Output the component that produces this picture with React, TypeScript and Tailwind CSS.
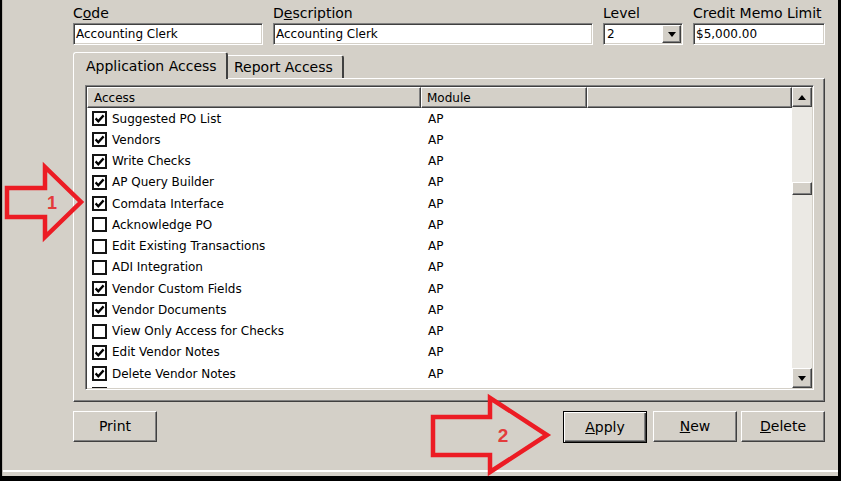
import React from "react";

type Row = [string, boolean];

const rows: Row[] = [
  ["Suggested PO List", true],
  ["Vendors", true],
  ["Write Checks", true],
  ["AP Query Builder", true],
  ["Comdata Interface", true],
  ["Acknowledge PO", false],
  ["Edit Existing Transactions", false],
  ["ADI Integration", false],
  ["Vendor Custom Fields", true],
  ["Vendor Documents", true],
  ["View Only Access for Checks", false],
  ["Edit Vendor Notes", true],
  ["Delete Vendor Notes", true],
];

// classic 3D edges
const sunken =
  "border border-t-[#808080] border-l-[#808080] border-r-white border-b-white shadow-[inset_1px_1px_0_#404040,inset_-1px_-1px_0_#d4d0c8]";
const raised =
  "border border-t-white border-l-white border-r-[#404040] border-b-[#404040] shadow-[inset_-1px_-1px_0_#808080] bg-[#d4d0c8]";

function Check({ on }: { on: boolean }) {
  return (
    <span className="w-[15px] h-[15px] border-2 border-[#141414] bg-white flex items-center justify-center shrink-0">
      {on && (
        <svg width="11" height="11" viewBox="0 0 11 11">
          <path d="M1.6 5.4 L4.3 8.2 L9.6 2.4" stroke="#000" strokeWidth="2.3" fill="none" />
        </svg>
      )}
    </span>
  );
}

function Field({ label, width, children }: { label: React.ReactNode; width: string; children: React.ReactNode }) {
  return (
    <div className={`flex flex-col ${width}`}>
      <div className="h-[17px] leading-[17px] text-[14px] whitespace-nowrap">{label}</div>
      <div className={`mt-[1px] h-[22px] bg-white ${sunken} p-[1px] flex items-center text-[12px]`}>{children}</div>
    </div>
  );
}

function Tri({ up }: { up?: boolean }) {
  return (
    <svg width="8" height="5" viewBox="0 0 8 5">
      <path d={up ? "M0 5 L8 5 L4 0 Z" : "M0 0 L8 0 L4 5 Z"} fill="#000" />
    </svg>
  );
}

function Btn({ children, def, w }: { children: React.ReactNode; def?: boolean; w: string }) {
  if (def) {
    return (
      <div className={`${w} h-[32px] border border-black bg-[#d4d0c8] shadow-[inset_1px_1px_0_#fff,inset_-1px_-1px_0_#404040,inset_-2px_-2px_0_#808080] flex items-center justify-center text-[14px]`}>
        {children}
      </div>
    );
  }
  return (
    <div className={`${w} h-[31px] ${raised} flex items-center justify-center text-[14px]`}>{children}</div>
  );
}

export default function App() {
  return (
    <div className="relative w-[841px] h-[481px] bg-black pl-[2px] pr-[3px] pb-[5px] font-['DejaVu_Sans',sans-serif] text-black overflow-hidden">
      <div className="h-full bg-[#d4d0c8] border-l border-l-[#b9b5ae] flex flex-col">
        <div className="flex-1 flex flex-col pl-[70px] pr-[13px] pt-[5px]">
          {/* top fields */}
          <div className="flex gap-[10px]">
            <Field label={<>C<span className="underline">o</span>de</>} width="w-[190px]">
              <span className="pl-[1px]">Accounting Clerk</span>
            </Field>
            <Field label={<>D<span className="underline">e</span>scription</>} width="w-[320px]">
              <span className="pl-[1px]">Accounting Clerk</span>
            </Field>
            <Field label="Level" width="w-[80px]">
              <span className="pl-[2px] flex-1">2</span>
              <span className={`w-[19px] h-[18px] ${raised} flex items-center justify-center`}>
                <Tri />
              </span>
            </Field>
            <Field label="Credit Memo Limit" width="w-[132px]">
              <span className="pl-[1px]">$5,000.00</span>
            </Field>
          </div>

          {/* tabs */}
          <div className="flex items-end h-[26px] mt-[7px]">
            <div className="relative z-10 -mb-px h-[27px] w-[155px] border-l border-t border-white border-r-2 border-r-[#404040] rounded-t-[3px] bg-[#d4d0c8] pl-[12px] flex items-center text-[14px] whitespace-nowrap">
              Application Access
            </div>
            <div className="h-[23px] w-[116px] border-t border-white border-r-2 border-r-[#404040] rounded-tr-[3px] pl-[6px] flex items-center text-[14px] whitespace-nowrap">
              Report Access
            </div>
          </div>

          {/* tab panel */}
          <div className="h-[324px] border-l border-t border-white border-r border-b border-r-[#404040] border-b-[#404040] shadow-[inset_-1px_-1px_0_#808080] pl-[11px] pr-[10px] pt-[6px]">
            <div className={`h-[305px] ${sunken} p-[1px]`}>
              <div className="h-full bg-white flex">
                <div className="flex-1 flex flex-col overflow-hidden">
                  <div className="flex h-[21px] shrink-0 text-[12px]">
                    <div className={`w-[334px] ${raised} pl-[6px] flex items-center`}>Access</div>
                    <div className={`w-[166px] ${raised} pl-[5px] flex items-center`}>Module</div>
                    <div className={`flex-1 ${raised}`} />
                  </div>
                  {rows.map(([name, on], i) => (
                    <div key={i} className="h-[21.25px] shrink-0 flex items-center text-[12px] whitespace-nowrap">
                      <div className="w-[334px] pl-[5px] flex items-center gap-[5px]">
                        <Check on={on} />
                        <span>{name}</span>
                      </div>
                      <div className="w-[166px] pl-[7px]">AP</div>
                    </div>
                  ))}
                  {/* next row, scrolled mostly out of view */}
                  <div className="h-[21.25px] shrink-0 flex items-center">
                    <div className="pl-[5px] flex items-center">
                      <Check on={true} />
                    </div>
                  </div>
                </div>
                {/* scrollbar */}
                <div className="w-[20px] flex flex-col">
                  <div className={`h-[20px] ${raised} flex items-center justify-center`}>
                    <Tri up />
                  </div>
                  <div className="flex-1 bg-[#ebe9e4]">
                    <div className={`mt-[75px] h-[13px] ${raised}`} />
                  </div>
                  <div className={`h-[20px] ${raised} flex items-center justify-center`}>
                    <Tri />
                  </div>
                </div>
              </div>
            </div>
          </div>

          {/* buttons */}
          <div className="flex items-start mt-[9px]">
            <Btn w="w-[84px]">Print</Btn>
            <div className="ml-auto">
              <Btn w="w-[84px]" def>
                <span><span className="underline">A</span>pply</span>
              </Btn>
            </div>
            <div className="ml-[6px]">
              <Btn w="w-[84px]">
                <span><span className="underline">N</span>ew</span>
              </Btn>
            </div>
            <div className="ml-[4px]">
              <Btn w="w-[84px]">
                <span><span className="underline">D</span>elete</span>
              </Btn>
            </div>
          </div>
        </div>
        <div className="h-[2px] bg-white" />
        <div className="h-[4px]" />
      </div>

      {/* red annotation arrows */}
      <svg className="absolute inset-0 pointer-events-none" width="841" height="481" viewBox="0 0 841 481">
        <polygon
          points="7,188 45,188 45,167 81,202 45,237 45,217 7,217"
          fill="none"
          stroke="#ec1c24"
          strokeWidth="4.5"
          strokeLinejoin="miter"
        />
        <text x="52" y="209" textAnchor="middle" fontFamily="Liberation Sans, sans-serif" fontWeight="bold" fontSize="18" fill="#e33b3b">
          1
        </text>
        <polygon
          points="433,417 490,417 490,398 547,435 490,472 490,455 433,455"
          fill="none"
          stroke="#ec1c24"
          strokeWidth="4.5"
          strokeLinejoin="miter"
        />
        <text x="503" y="442" textAnchor="middle" fontFamily="Liberation Sans, sans-serif" fontWeight="bold" fontSize="19" fill="#e33b3b">
          2
        </text>
      </svg>
    </div>
  );
}
